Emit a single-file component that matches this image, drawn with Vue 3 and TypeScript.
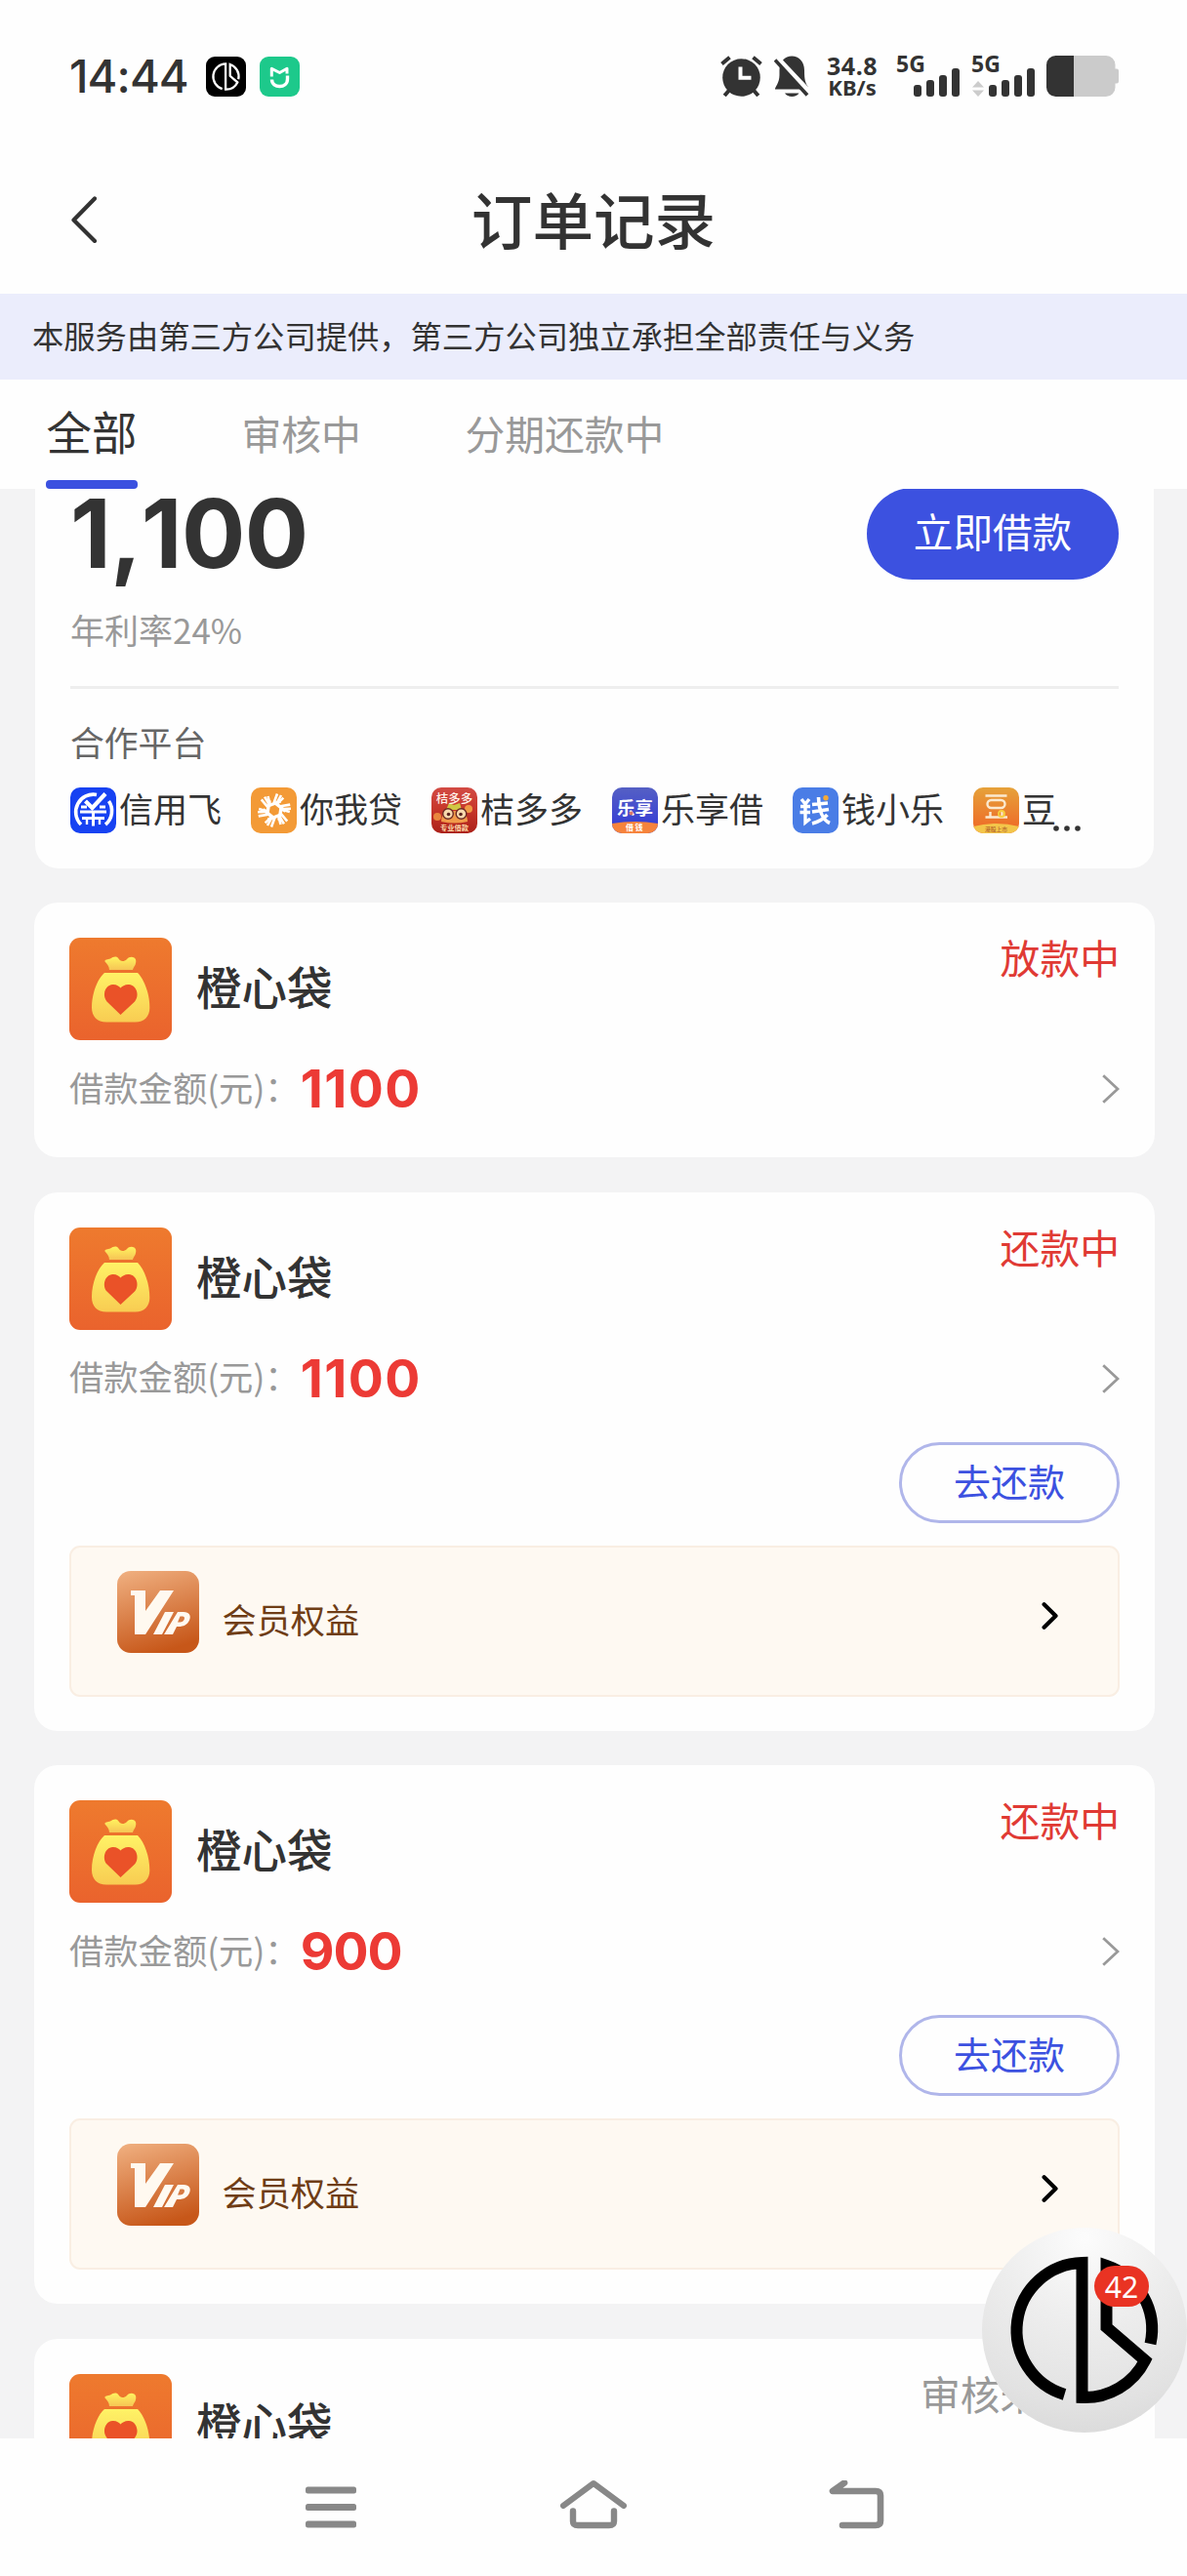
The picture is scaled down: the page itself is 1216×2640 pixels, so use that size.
<script setup lang="ts">
interface Order {
  id: number
  name: string
  status: string
  muted?: boolean
  amount: string
  repay?: boolean
}

interface Partner {
  key: string
  name: string
}

const tabs: string[] = ['全部', '审核中', '分期还款中']

const partners: Partner[] = [
  { key: 'xyf', name: '信用飞' },
  { key: 'nwd', name: '你我贷' },
  { key: 'jdd', name: '桔多多' },
  { key: 'lxj', name: '乐享借' },
  { key: 'qxl', name: '钱小乐' },
  { key: 'dou', name: '豆' },
]

const orders: Order[] = [
  { id: 1, name: '橙心袋', status: '放款中', amount: '1100' },
  { id: 2, name: '橙心袋', status: '还款中', amount: '1100', repay: true },
  { id: 3, name: '橙心袋', status: '还款中', amount: '900', repay: true },
  { id: 4, name: '橙心袋', status: '审核未通过', amount: '1000', muted: true },
]

const spokes: number[] = [0, 60, 120, 180, 240, 300]
const signalBars: number[] = [12, 17, 22, 29]
</script>

<template>
  <div class="screen">
    <div class="status-bar">
      <div class="status-left">
        <span class="clock">14:44</span>
        <svg class="app-dot" viewBox="0 0 41 41">
          <rect width="41" height="41" rx="9" fill="#000" />
          <g transform="translate(20.5 20.5) scale(0.19)" fill="none" stroke="#fff" stroke-width="12">
            <path d="M-20 66A69 69 0 0 1 -2 -69V69A69 69 0 0 0 62 31L22 -4V-66A69 69 0 0 1 67 14" />
          </g>
        </svg>
        <svg class="app-dot second" viewBox="0 0 41 41">
          <rect width="41" height="41" rx="9" fill="#1dc98b" />
          <path d="M12.3 20.5V12.3L20.5 16.5L28 12.3V17.5" fill="none" stroke="#fff" stroke-width="3" stroke-linejoin="round" />
          <path d="M12.5 23.5C12.5 33 28.5 33 28.5 23V19.5" fill="none" stroke="#fff" stroke-width="3.4" />
        </svg>
      </div>
      <div class="status-right">
        <svg class="alarm" viewBox="0 0 43 42">
          <circle cx="21.5" cy="22.5" r="19.3" fill="#333" />
          <path d="M1.5 8.5L9.5 1.8M41.5 8.5L33.5 1.8" stroke="#333" stroke-width="4" />
          <path d="M9 35.5L4.2 41M34 35.5L38.8 41" stroke="#333" stroke-width="4" />
          <path d="M20.5 11.5V22.8H31.5" fill="none" stroke="#fff" stroke-width="4" />
        </svg>
        <svg class="bell" viewBox="0 0 36 42">
          <path d="M5.500 15C5.500 6 11 0.500 18.200 0.500S31 6 31 15C31 25 32 28 35 32.500V34.500H1C0.500 33 5.500 28 5.500 20Z" fill="#333" />
          <path d="M11 38.500H25.500C23 43 13.500 43 11 38.500Z" fill="#333" />
          <path d="M3 3L36 38" stroke="#fff" stroke-width="6.500" />
          <path d="M1 4.500L34 40.500" stroke="#333" stroke-width="3.600" />
        </svg>
        <div class="net">
          <span class="net-value">34.8</span>
          <span class="net-unit">KB/s</span>
        </div>
        <div class="signal">
          <span class="gen">5G</span>
          <div class="bars">
            <i v-for="h in signalBars" :key="h" :style="{ height: h + 'px' }"></i>
          </div>
        </div>
        <div class="signal sim2">
          <span class="gen">5G</span>
          <div class="bars">
            <svg class="updown" viewBox="0 0 12 16">
              <path d="M6 0L12 6.500H0ZM6 16L12 9.500H0Z" fill="#ccc" />
            </svg>
            <i v-for="h in signalBars" :key="h" :style="{ height: h + 'px' }"></i>
          </div>
        </div>
        <svg class="battery" viewBox="0 0 74 42">
          <path d="M28 0H61A9.500 9.500 0 0 1 70.500 9.500V13.500H72A2 2 0 0 1 74 15.500V26.500A2 2 0 0 1 72 28.500H70.500V32.500A9.500 9.500 0 0 1 61 42H28Z" fill="#cbcbcb" />
          <path d="M28 0H9.500A9.500 9.500 0 0 0 0 9.500V32.500A9.500 9.500 0 0 0 9.500 42H28Z" fill="#333" />
        </svg>
      </div>
    </div>

    <header class="header">
      <svg class="back" viewBox="0 0 26 48">
        <path d="M24 2.500L2.500 24.500L24 46" fill="none" stroke="#333" stroke-width="4.200" stroke-linecap="round" stroke-linejoin="round" />
      </svg>
      <h1>订单记录</h1>
    </header>

    <div class="notice">本服务由第三方公司提供，第三方公司独立承担全部责任与义务</div>

    <nav class="tabs">
      <div v-for="(tab, i) in tabs" :key="tab" class="tab" :class="{ active: i === 0 }">{{ tab }}</div>
    </nav>

    <main class="list">
      <section class="loan-card">
        <div class="loan-top">
          <span class="loan-amount">1,100</span>
          <button class="loan-btn">立即借款</button>
        </div>
        <div class="rate">年利率24%</div>
        <div class="divider"></div>
        <div class="partner-title">合作平台</div>
        <div class="partners">
          <div v-for="p in partners" :key="p.key" class="partner">
            <svg v-if="p.key === 'xyf'" class="logo" viewBox="0 0 47 47">
              <rect width="47" height="47" rx="10" fill="#1742f2" />
              <path d="M11 38A18 18 0 0 1 27 7.500M36 38A18 18 0 0 0 39.500 14" fill="none" stroke="#fff" stroke-width="3.600" />
              <path d="M11 20H17M30 20H36M10 25H37M12 31.500H35M23.500 24V39.500" fill="none" stroke="#fff" stroke-width="3" />
              <path d="M17 38V31M30 38V31" fill="none" stroke="#fff" stroke-width="2.400" />
              <path d="M15.500 14L22.500 21L36 6.500" fill="none" stroke="#fff" stroke-width="4.200" />
            </svg>
            <svg v-else-if="p.key === 'nwd'" class="logo" viewBox="0 0 47 47">
              <rect width="47" height="47" rx="10" fill="#f39a36" />
              <g v-for="a in spokes" :key="a" :transform="`rotate(${a} 24 23.500)`" fill="none" stroke="#fff">
                <path d="M17.500 19L30.500 14" stroke-width="3.400" />
                <path d="M19.500 17L17.500 9M23.500 16L27 6.500M27.500 14.500L31 8" stroke-width="2.600" />
              </g>
            </svg>
            <svg v-else-if="p.key === 'jdd'" class="logo" viewBox="0 0 47 47">
              <defs>
                <linearGradient id="jdd" x1="0" y1="0" x2="0" y2="1">
                  <stop offset="0" stop-color="#d24b44" /><stop offset="0.450" stop-color="#c8382c" /><stop offset="1" stop-color="#ab2019" />
                </linearGradient>
              </defs>
              <rect width="47" height="47" rx="10" fill="url(#jdd)" />
              <path d="M15 23L18 16L23 18L29 16L31 23Z" fill="#cfc744" />
              <circle cx="38" cy="22" r="4" fill="#ef9a45" /><circle cx="6" cy="30" r="4" fill="#e9863d" />
              <path d="M10 35Q10 24 23.500 24T37 35Q24 38 10 35Z" fill="#f19a4a" />
              <circle cx="17" cy="27" r="5.300" fill="#f7d9ae" stroke="#6c2a24" stroke-width="1.400" />
              <circle cx="30.500" cy="27" r="5.300" fill="#f7d9ae" stroke="#6c2a24" stroke-width="1.400" />
              <circle cx="17.500" cy="27.500" r="1.800" fill="#5b2420" /><circle cx="30" cy="27.500" r="1.800" fill="#5b2420" />
              <text x="23.500" y="16" class="logo-text" font-size="12.500" font-weight="500" fill="#fff0e8">桔多多</text>
              <text x="23.500" y="44" class="logo-text" font-size="7.200" font-weight="700" fill="#ffd9a8">专业借款</text>
            </svg>
            <svg v-else-if="p.key === 'lxj'" class="logo" viewBox="0 0 47 47">
              <defs>
                <linearGradient id="lxj" x1="0" y1="0" x2="0" y2="1">
                  <stop offset="0" stop-color="#5560c4" /><stop offset="1" stop-color="#3038d8" />
                </linearGradient>
                <clipPath id="lxjClip"><rect width="47" height="47" rx="10" /></clipPath>
              </defs>
              <g clip-path="url(#lxjClip)">
                <rect width="47" height="47" fill="url(#lxj)" />
                <path d="M0 37Q23.500 33 47 37V47H0Z" fill="#f6833c" />
              </g>
              <text x="23.500" y="27.500" class="logo-text" font-size="18.500" font-weight="700" fill="#fff">乐享</text>
              <circle cx="19.500" cy="26.500" r="2" fill="#d97a6c" />
              <text x="23.500" y="44" class="logo-text" font-size="8" font-weight="700" fill="#fff" letter-spacing="1.500">借钱</text>
            </svg>
            <svg v-else-if="p.key === 'qxl'" class="logo" viewBox="0 0 47 47">
              <rect width="47" height="47" rx="10" fill="#4a7de6" />
              <path d="M9 12L13 17L17 12M8 19.500H18M7.500 25.500H18M13 17V36L18 32" fill="none" stroke="#fff" stroke-width="3.400" />
              <path d="M26.500 10C27 24 30 33 38 36.500M20 17.500L36 16M20 25L37 22.500M35.500 28C31 33 26 35.500 20 37" fill="none" stroke="#fff" stroke-width="3.600" />
              <circle cx="34" cy="10.800" r="2.700" fill="#f5a935" />
            </svg>
            <svg v-else class="logo" viewBox="0 0 47 47">
              <defs>
                <linearGradient id="dou" x1="0" y1="0" x2="0" y2="1">
                  <stop offset="0" stop-color="#e6a23a" /><stop offset="1" stop-color="#ef6526" />
                </linearGradient>
                <clipPath id="douClip"><rect width="47" height="47" rx="10" /></clipPath>
              </defs>
              <g clip-path="url(#douClip)">
                <rect width="47" height="47" fill="url(#dou)" />
                <path d="M0 40Q23.500 34 47 40V47H0Z" fill="#f3c54a" />
              </g>
              <path d="M12.500 8.500H34.500M12.500 30.500H35M17.500 25V30M29.500 25V30" fill="none" stroke="#fbe9cf" stroke-width="2.400" />
              <rect x="14.500" y="13" width="18" height="8" rx="4" fill="none" stroke="#fbe9cf" stroke-width="2.400" />
              <circle cx="29" cy="27" r="3" fill="none" stroke="#f7cf3d" stroke-width="1.800" />
              <text x="23.500" y="44.500" class="logo-text" font-size="5.800" font-weight="500" fill="#b5652a">港股上市</text>
            </svg>
            <span>{{ p.name }}</span>
          </div>
          <svg class="more" viewBox="0 0 28 6">
            <circle cx="3" cy="3" r="2.800" fill="#333" /><circle cx="14" cy="3" r="2.800" fill="#333" /><circle cx="25" cy="3" r="2.800" fill="#333" />
          </svg>
        </div>
      </section>

      <section v-for="o in orders" :key="o.id" class="order" :class="{ tall: o.repay }">
        <div class="order-head">
          <svg class="bag" viewBox="0 0 105 105">
            <defs>
              <linearGradient :id="'bg' + o.id" x1="0" y1="0" x2="0" y2="1">
                <stop offset="0" stop-color="#ee7a2e" /><stop offset="1" stop-color="#ea632d" />
              </linearGradient>
              <linearGradient :id="'gold' + o.id" x1="0" y1="0" x2="0" y2="1">
                <stop offset="0" stop-color="#fff266" /><stop offset="1" stop-color="#f8cc52" />
              </linearGradient>
              <linearGradient :id="'tie' + o.id" x1="0" y1="0" x2="0" y2="1">
                <stop offset="0" stop-color="#fff35f" /><stop offset="1" stop-color="#f6c455" />
              </linearGradient>
            </defs>
            <rect width="105" height="105" rx="11" :fill="`url(#bg${o.id})`" />
            <path d="M36.500 24.500C36 22 39.500 22.500 42 21.500C45 19.500 48.500 18.500 50.500 21.500C52 24.500 56 25 59 22C61 19.500 64 19 66.500 20.500C69 22.500 68.500 25 67.500 28C66 30 65.500 31.500 65 33H41C41 29.500 38.500 26.500 36.500 24.500Z" :fill="`url(#tie${o.id})`" />
            <path d="M36 36H70C77 43 82.500 58 82.300 72C82.300 80.500 77 86.500 67.500 86.500H38C28.500 86.500 23 80.500 23 71.500C23 57 29 42 36 36Z" :fill="`url(#gold${o.id})`" />
            <path d="M52.500 79L38.500 65.500C33.500 60 36 48.500 44.500 48C48.500 47.800 51 50 52.500 51.500C54 50 57 47.800 61 48C69.500 48.500 72 60 67 65.500Z" fill="#ea5228" />
          </svg>
          <span class="order-name">{{ o.name }}</span>
          <span class="order-status" :class="{ muted: o.muted }">{{ o.status }}</span>
        </div>
        <div class="amount-row">
          <span class="amount-label">借款金额(元)：</span>
          <span class="amount" :class="{ long: o.amount.length > 3 }">{{ o.amount }}</span>
          <svg class="chev" viewBox="0 0 18 30">
            <path d="M1.200 1.200L16 15L1.200 28.800" fill="none" stroke="#999" stroke-width="2.800" />
          </svg>
        </div>
        <template v-if="o.repay">
          <button class="repay">去还款</button>
          <div class="vip">
            <svg class="vip-icon" viewBox="0 0 84 84">
              <defs>
                <linearGradient :id="'vip' + o.id" x1="0.200" y1="0" x2="0.500" y2="1">
                  <stop offset="0" stop-color="#eeac7c" /><stop offset="1" stop-color="#c75719" />
                </linearGradient>
              </defs>
              <rect width="84" height="84" rx="14" :fill="`url(#vip${o.id})`" />
              <path d="M14 20H29V41L44 20H58L29 65H18V25H14Z" fill="#fff9f0" />
              <path d="M49 42H58L46 65H37ZM62 42H68C74 42 76 46 74 50.500C72 55 68 57 63 57H61L57 65H48Z" fill="#fff9f0" />
              <path d="M64.500 46.500L62 52.500H64.500C67.500 52.500 69.500 49.500 68.800 47.500C68.500 46.700 67.500 46.500 66.500 46.500Z" fill="#d77a42" />
            </svg>
            <span class="vip-text">会员权益</span>
            <svg class="vip-chev" viewBox="0 0 18 28">
              <path d="M2.600 2.300L14.500 14L2.600 25.700" fill="none" stroke="#000" stroke-width="4.200" stroke-linecap="round" stroke-linejoin="round" />
            </svg>
          </div>
        </template>
      </section>
    </main>

    <footer class="sysnav">
      <svg class="nav-icon menu" viewBox="0 0 52 43">
        <rect v-for="y in [0.5, 18, 35.5]" :key="y" x="0" :y="y" width="52" height="7" rx="2.500" fill="#888" />
      </svg>
      <svg class="nav-icon home" viewBox="0 0 68 51">
        <path d="M3 27L34 4L65 27" fill="none" stroke="#888" stroke-width="6" stroke-linecap="round" stroke-linejoin="round" />
        <path d="M13 32.500V43Q13 47 18 47H50Q55 47 55 43V32.500" fill="none" stroke="#888" stroke-width="6.400" stroke-linecap="round" />
      </svg>
      <svg class="nav-icon undo" viewBox="0 0 57 50">
        <path d="M16 2.500L4 11H48Q53 11 53 15.500V41.500Q53 46 48 46H14" fill="none" stroke="#888" stroke-width="6.600" stroke-linecap="round" stroke-linejoin="round" />
      </svg>
    </footer>

    <div class="floating">
      <svg class="float-logo" viewBox="-105 -105 210 210">
        <path d="M-20.500 66A69 69 0 0 1 -2.500 -69V69A69 69 0 0 0 62 31L22.500 -3V-66A69 69 0 0 1 67.500 14" fill="none" stroke="#000" stroke-width="12" stroke-miterlimit="8" />
      </svg>
      <span class="badge">42</span>
    </div>
  </div>
</template>

<style>
html,
body {
  margin: 0;
  background: #fefefe;
}
</style>

<style scoped>
.screen {
  position: relative;
  width: 1216px;
  height: 2640px;
  overflow: hidden;
  display: flex;
  flex-direction: column;
  background: #fefefe;
  color: #333;
  font-family: "Noto Sans CJK SC", sans-serif;
}
.screen svg {
  display: block;
  flex: none;
}
.status-bar {
  height: 156px;
  box-sizing: border-box;
  padding: 0 70px 0 71px;
  display: flex;
  justify-content: space-between;
  align-items: center;
  flex: none;
}
.status-left,
.status-right {
  display: flex;
  align-items: center;
}
.clock {
  font: 500 47px/50px Inter, sans-serif;
  letter-spacing: -0.9px;
  width: 140px;
}
.app-dot {
  width: 41px;
  height: 41px;
}
.app-dot.second {
  margin-left: 14px;
}
.alarm {
  width: 43px;
  height: 42px;
}
.bell {
  width: 36px;
  height: 42px;
  margin-left: 12px;
}
.net {
  margin-left: 15px;
  width: 58px;
  height: 42px;
  display: flex;
  flex-direction: column;
  align-items: center;
  font-family: "Noto Sans", sans-serif;
  font-weight: 700;
}
.net-value {
  font-size: 25px;
  line-height: 21px;
  letter-spacing: 0.5px;
}
.net-unit {
  font-size: 22px;
  line-height: 22px;
}
.signal {
  position: relative;
  width: 64px;
  height: 42px;
  margin-left: 17px;
  display: flex;
  align-items: flex-end;
  justify-content: flex-end;
}
.signal.sim2 {
  margin-left: 13px;
}
.gen {
  position: absolute;
  left: -1px;
  top: 0;
  font: 700 23px/17px "Noto Sans", sans-serif;
}
.bars {
  display: flex;
  align-items: flex-end;
  gap: 5px;
}
.bars i {
  width: 8px;
  border-radius: 3px;
  background: #333;
}
.updown {
  width: 12px;
  height: 16px;
}
.battery {
  width: 74px;
  height: 42px;
  margin-left: 12px;
}
.header {
  height: 145px;
  box-sizing: border-box;
  padding: 0 73px 10px;
  display: grid;
  grid-template-columns: 26px 1fr 26px;
  align-items: center;
  flex: none;
}
.back {
  width: 26px;
  height: 48px;
  margin-top: 2px;
}
h1 {
  margin: -2px 0 0;
  text-align: center;
  font-size: 62.6px;
  line-height: 90px;
  font-weight: 500;
}
.notice {
  height: 88px;
  line-height: 84px;
  padding-left: 33px;
  font-size: 32.3px;
  background: #ebedfc;
  flex: none;
}
.tabs {
  height: 112px;
  display: flex;
  padding-left: 47px;
  flex: none;
}
.tab {
  box-sizing: border-box;
  height: 112px;
  line-height: 110px;
  font-size: 40.8px;
  color: #999;
  margin-right: 106.5px;
}
.tab.active {
  width: 94px;
  text-align: center;
  font-size: 46.4px;
  line-height: 104px;
  color: #333;
  display: flex;
  flex-direction: column;
}
.tab.active::after {
  content: "";
  height: 9px;
  margin-top: -1px;
  border-radius: 4px;
  background: #3b51e0;
  flex: none;
}
.list {
  height: 1998px;
  overflow: hidden;
  background: #f3f3f4;
  flex: none;
}
.loan-card {
  height: 388.5px;
  box-sizing: border-box;
  margin: 0 34px 0 36px;
  padding: 0 36px;
  background: #fefefe;
  border-radius: 0 0 24px 24px;
  display: flow-root;
}
.loan-top {
  display: flex;
  justify-content: space-between;
  align-items: center;
  height: 96px;
  margin-top: -2px;
}
.loan-amount {
  font: 700 97px/96px Inter, sans-serif;
  font-kerning: none;
  letter-spacing: -0.7px;
}
button {
  font-family: inherit;
  padding: 0;
}
.loan-btn {
  width: 258px;
  height: 94px;
  border: 0;
  border-radius: 47px;
  background: #3c51e0;
  color: #fff;
  font-size: 40.6px;
  line-height: 88px;
  padding-bottom: 6px;
}
.rate {
  margin-top: 25px;
  font-size: 35px;
  line-height: 50px;
  color: #999;
}
.divider {
  height: 3px;
  margin-top: 33px;
  background: #eee;
}
.partner-title {
  margin-top: 28.5px;
  font-size: 34.8px;
  line-height: 50px;
  color: #666;
}
.partners {
  display: flex;
  margin-top: 22.5px;
  height: 47px;
}
.partner {
  display: flex;
  align-items: center;
  width: 185px;
  flex: none;
  font-size: 35px;
  line-height: 43px;
}
.partner span {
  margin: -6px 0 0 3px;
}
.partner:nth-child(6) {
  width: 82px;
}
.logo {
  width: 47px;
  height: 47px;
}
.logo-text {
  text-anchor: middle;
  font-family: "Noto Sans CJK SC", sans-serif;
}
.more {
  width: 28px;
  height: 6px;
  margin-top: 39px;
}
.order {
  height: 261px;
  box-sizing: border-box;
  margin: 35.5px 33px 0 35px;
  padding: 36px 36px 0;
  border-radius: 24px;
  background: #fefefe;
}
.order.tall {
  height: 552px;
}
.order-head {
  display: flex;
  height: 105px;
}
.bag {
  width: 105px;
  height: 105px;
}
.order-name {
  margin-left: 25px;
  font-size: 46.5px;
  font-weight: 500;
  line-height: 97px;
}
.order-status {
  margin-left: auto;
  font-size: 40.8px;
  line-height: 40px;
  color: #e03a34;
}
.order-status.muted {
  color: #999;
}
.amount-row {
  display: flex;
  align-items: center;
  height: 50px;
  margin-top: 25px;
}
.amount-label {
  font-size: 35.3px;
  line-height: 46px;
  color: #999;
  margin-top: -5px;
}
.amount {
  margin-left: 1px;
  font: 700 53.5px/50px Inter, sans-serif;
  font-kerning: none;
  letter-spacing: -1px;
  color: #ec3a35;
}
.amount.long {
  letter-spacing: 1.5px;
}
.chev {
  width: 18px;
  height: 30px;
  margin-left: auto;
}
.repay {
  display: block;
  box-sizing: border-box;
  width: 226px;
  height: 83px;
  margin: 40px 0 0 auto;
  border: 3px solid #b0b6ea;
  border-radius: 42px;
  background: transparent;
  color: #3c51e0;
  font-size: 38px;
  line-height: 71px;
  padding-bottom: 6px;
}
.vip {
  box-sizing: border-box;
  height: 155px;
  margin-top: 23px;
  padding: 24px 60px 0 47px;
  border: 2px solid #f9eee3;
  border-radius: 11px;
  background: #fef9f2;
  display: flex;
}
.vip-icon {
  width: 84px;
  height: 84px;
}
.vip-text {
  margin-left: 23.5px;
  font-size: 35.2px;
  line-height: 98px;
  color: #6f3d16;
}
.vip-chev {
  width: 18px;
  height: 28px;
  margin: 32px 0 0 auto;
}
.sysnav {
  flex: 1;
  display: flex;
  align-items: flex-start;
  padding-left: 313px;
}
.nav-icon.menu {
  width: 52px;
  height: 43px;
  margin-top: 49px;
}
.nav-icon.home {
  width: 68px;
  height: 51px;
  margin: 42px 0 0 209px;
}
.nav-icon.undo {
  width: 57px;
  height: 50px;
  margin: 43px 0 0 207px;
}
.floating {
  position: absolute;
  left: 1006px;
  top: 2283px;
  width: 210px;
  height: 210px;
  border-radius: 50%;
  background: radial-gradient(circle at 50% 5%, #fcfcfc 0, #ededed 40%, #e2e2e2 75%, #d6d6d6 100%);
}
.float-logo {
  width: 210px;
  height: 210px;
}
.badge {
  position: absolute;
  left: 115px;
  top: 39px;
  width: 56px;
  height: 42px;
  border-radius: 21px;
  background: #e93323;
  color: #fff;
  text-align: center;
  font: 400 30px/43px "Noto Sans", sans-serif;
}
</style>
